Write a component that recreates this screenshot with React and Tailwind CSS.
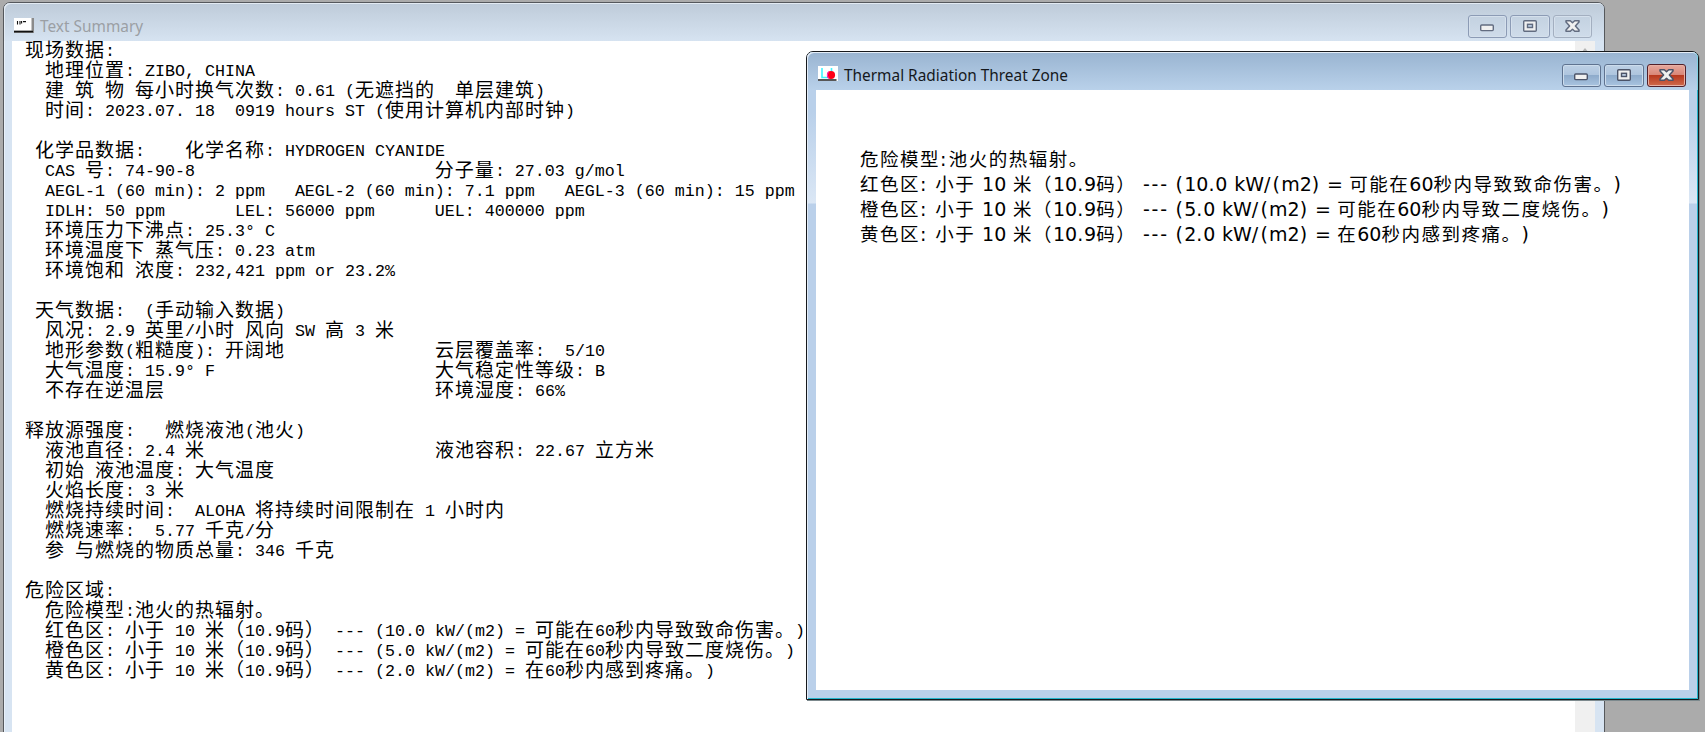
import clsx from 'clsx'

const SUMMARY = [
  '现场数据:',
  '  地理位置: ZIBO, CHINA',
  '  建 筑 物 每小时换气次数: 0.61 (无遮挡的  单层建筑)',
  '  时间: 2023.07. 18  0919 hours ST (使用计算机内部时钟)',
  '',
  ' 化学品数据:    化学名称: HYDROGEN CYANIDE',
  '  CAS 号: 74-90-8                        分子量: 27.03 g/mol',
  '  AEGL-1 (60 min): 2 ppm   AEGL-2 (60 min): 7.1 ppm   AEGL-3 (60 min): 15 ppm',
  '  IDLH: 50 ppm       LEL: 56000 ppm      UEL: 400000 ppm',
  '  环境压力下沸点: 25.3° C',
  '  环境温度下 蒸气压: 0.23 atm',
  '  环境饱和 浓度: 232,421 ppm or 23.2%',
  '',
  ' 天气数据:  (手动输入数据)',
  '  风况: 2.9 英里/小时 风向 SW 高 3 米',
  '  地形参数(粗糙度): 开阔地               云层覆盖率:  5/10',
  '  大气温度: 15.9° F                      大气稳定性等级: B',
  '  不存在逆温层                           环境湿度: 66%',
  '',
  '释放源强度:   燃烧液池(池火)',
  '  液池直径: 2.4 米                       液池容积: 22.67 立方米',
  '  初始 液池温度: 大气温度',
  '  火焰长度: 3 米',
  '  燃烧持续时间:  ALOHA 将持续时间限制在 1 小时内',
  '  燃烧速率:  5.77 千克/分',
  '  参 与燃烧的物质总量: 346 千克',
  '',
  '危险区域:',
  '  危险模型:池火的热辐射。',
  '  红色区: 小于 10 米（10.9码） --- (10.0 kW/(m2) = 可能在60秒内导致致命伤害。)',
  '  橙色区: 小于 10 米（10.9码） --- (5.0 kW/(m2) = 可能在60秒内导致二度烧伤。)',
  '  黄色区: 小于 10 米（10.9码） --- (2.0 kW/(m2) = 在60秒内感到疼痛。)',
]

const THREAT = [
  '危险模型:池火的热辐射。',
  '红色区: 小于 10 米（10.9码） --- (10.0 kW/(m2) = 可能在60秒内导致致命伤害。)',
  '橙色区: 小于 10 米（10.9码） --- (5.0 kW/(m2) = 可能在60秒内导致二度烧伤。)',
  '黄色区: 小于 10 米（10.9码） --- (2.0 kW/(m2) = 在60秒内感到疼痛。)',
]

const CJK = /([\u3000-\u9fff\uff00-\uffef]+)/

// Chinese runs take two columns per character, everything else one
function MonoLine({ text }) {
  return (
    <div className="flex h-5 items-center whitespace-pre leading-5">
      {text.split(CJK).filter(Boolean).map((run, i) => (
        <span
          key={i}
          className={clsx(
            CJK.test(run)
              ? "relative -top-[2px] font-['Noto_Sans_CJK_SC',sans-serif] text-[19px] tracking-[1px]"
              : "relative top-px font-['Liberation_Mono',monospace] text-[16.667px]"
          )}
        >
          {run}
        </span>
      ))}
    </div>
  )
}

const SPACING = {
  ':': 'tracking-[2.2px]',
  '-': 'tracking-[1.8px]',
  '(': 'tracking-[1.2px]',
  ')': 'tracking-[1.2px]',
  '/': 'tracking-[2.2px]',
  '.': 'tracking-[0.9px]',
  '=': '-tracking-[0.4px]',
  ' ': 'tracking-[0.65px]',
}

function SansLine({ text }) {
  return (
    <div className="flex h-[25px] items-center whitespace-pre leading-[25px]">
      {text.split(CJK).filter(Boolean).map((run, i) =>
        CJK.test(run) ? (
          <span key={i} className="relative -top-px font-['Noto_Sans_CJK_SC',sans-serif] text-[18.5px] tracking-[1.5px]">{run}</span>
        ) : (
          <span key={i} className="font-['DejaVu_Sans',sans-serif] text-[19px]">
            {run.split(/([:\-()/.= ])/).filter(Boolean).map((c, j) => (
              <span key={j} className={SPACING[c]}>{c}</span>
            ))}
          </span>
        )
      )}
    </div>
  )
}

function Glyph({ kind, active }) {
  const stroke = active ? '#4b5368' : '#626c80'
  if (kind === 'min') {
    return (
      <svg width="14" height="14" viewBox="0 0 14 14">
        <rect x="0.7" y="6" width="12.6" height="5.6" rx="1" fill="#f0f0f0" stroke={stroke} strokeWidth="1.4" />
      </svg>
    )
  }
  if (kind === 'max') {
    return (
      <svg width="14" height="12" viewBox="0 0 14 12">
        <rect x="0.7" y="0.7" width="12.6" height="10.6" rx="1" fill="#f0f0f0" stroke={stroke} strokeWidth="1.4" />
        <rect x="4.5" y="4.3" width="5" height="3.2" fill="#b9cbe0" stroke={stroke} strokeWidth="1.4" />
      </svg>
    )
  }
  return (
    <svg width="15" height="12" viewBox="0 0 15 12" className="relative -top-[0.5px]">
      <path
        d="M1 .8H5.3L7.5 2.8L9.7 .8H14V2L10.4 6L14 10V11.2H9.7L7.5 9.2L5.3 11.2H1V10L4.6 6L1 2Z"
        fill="#f0f0f0"
        stroke={stroke}
        strokeWidth="1.5"
        strokeLinejoin="round"
      />
    </svg>
  )
}

function Controls({ active }) {
  return (
    <div className="flex gap-[3px]">
      {['min', 'max', 'close'].map((kind) => (
        <button
          key={kind}
          className={clsx(
            'flex h-[22.5px] w-[39.5px] items-center justify-center rounded-[3px] border',
            !active && kind !== 'close' && 'border-[#8c9bb5] bg-linear-to-b from-[#c3d1e0] to-[#cfdcea] shadow-[inset_0_0_0_1px_#d5e0ec]',
            !active && kind === 'close' && 'border-[#a3afc0] bg-linear-to-b from-[#c3d1e0] to-[#cfdcea] shadow-[inset_0_0_0_1px_#d5e0ec]',
            active && kind !== 'close' && 'border-[#5f7390] bg-[linear-gradient(#bdd0e5_0%,#aec5de_47%,#8eabcb_50%,#a9c4e0_100%)] shadow-[inset_0_0_0_1px_#ccdcec]',
            active && kind === 'close' && 'border-[#52202a] bg-[linear-gradient(#e6a79d_0%,#d98778_47%,#b8391f_50%,#cf6a4c_100%)] shadow-[inset_0_0_0_1px_#e8b0a4]'
          )}
        >
          <Glyph kind={kind} active={active} />
        </button>
      ))}
    </div>
  )
}

function SummaryIcon() {
  return (
    <svg width="20" height="15" viewBox="0 0 20 15">
      <rect width="20" height="15" fill="#8b8b8b" />
      <rect width="17.5" height="12.6" fill="#fff" />
      <rect y="12.8" width="19" height="1.6" fill="#111" />
      <path d="M3.5 3V6.6M6 3V6.6M7.6 3V5.6M9 3.6H12" stroke="#111" strokeWidth="1.1" />
    </svg>
  )
}

function ThreatIcon() {
  return (
    <svg width="20" height="15" viewBox="0 0 20 15">
      <rect width="20" height="15" fill="#fff" />
      <path d="M4 2V11.5H10M13.5 2V6" stroke="#40f4ff" strokeWidth="1.6" fill="none" />
      <circle cx="13" cy="9" r="4.1" fill="#ff0018" />
      <path d="M10.5 12.5L9.3 9L10.5 5.5" stroke="#ff20d0" strokeWidth="1" fill="none" />
      <rect y="13.3" width="18.5" height="1.4" fill="#111" />
    </svg>
  )
}

function SummaryWindow() {
  return (
    <section className="absolute left-[3px] top-[2px] flex h-[760px] w-[1602px] flex-col rounded-t-[7px] border border-[#55585c] bg-[#d7e4f2] shadow-[inset_1px_1px_0_#e8f0f8]">
      <header className="flex h-[38px] shrink-0 items-start justify-between rounded-t-[6px] bg-linear-to-b from-[#becbd9] to-[#d6e3f1] pl-[10px] pr-[12px] shadow-[inset_1px_1px_0_#e3ebf3]">
        <div className="flex items-start pt-[10px]">
          <div className="pt-[5px]">
            <SummaryIcon />
          </div>
          <h1 className="ml-[6px] mt-[3px] font-['Noto_Sans',sans-serif] text-[15.4px] leading-[22px] text-[#9b9fa4]">Text Summary</h1>
        </div>
        <div className="pt-[12px]">
          <Controls />
        </div>
      </header>
      <div className="ml-2 mr-[9px] flex min-h-0 grow bg-white">
        <div className="grow pl-[13px] text-black">
          {SUMMARY.map((line, i) => (
            <MonoLine key={i} text={line} />
          ))}
        </div>
        <div className="flex w-5 justify-center bg-[#f0f0f0] pt-[7px]">
          <svg width="8" height="5" viewBox="0 0 8 5">
            <path d="M4 0L8 5H0Z" fill="#b5b5b5" />
          </svg>
        </div>
      </div>
    </section>
  )
}

function ThreatWindow() {
  return (
    <section className="absolute left-[806px] top-[51px] flex h-[649px] w-[893px] flex-col rounded-t-[7px] border border-[#16191d] bg-[linear-gradient(#b9d0ea_0px,#b9d0ea_60px,#dbe7f5_151px,#bad0ea_152px)] shadow-[inset_1px_1px_0_#e4edf7,inset_-1px_-1px_0_#23b5cc,1px_1px_0_#7d8a8e]">
      <header className="flex h-[38px] shrink-0 items-start justify-between rounded-t-[6px] bg-linear-to-b from-[#99b4d1] to-[#b9d1ea] pl-[11px] pr-[12px] shadow-[inset_1px_1px_0_#e4edf7,inset_-1px_0_0_#7fd3e4]">
        <div className="flex items-start pt-[10px]">
          <div className="pt-[4px]">
            <ThreatIcon />
          </div>
          <h2 className="ml-[6px] mt-[3px] font-['Noto_Sans',sans-serif] text-[15.4px] leading-[22px] text-[#15181c]">Thermal Radiation Threat Zone</h2>
        </div>
        <div className="pt-[12px]">
          <Controls active />
        </div>
      </header>
      <div className="mb-[9px] ml-[9px] mr-[9px] grow bg-white pl-[44px] pt-[57px] text-black">
        {THREAT.map((line, i) => (
          <SansLine key={i} text={line} />
        ))}
      </div>
    </section>
  )
}

export default function App() {
  return (
    <main className="relative h-[732px] w-[1705px] overflow-hidden bg-[#ababab]">
      <SummaryWindow />
      <ThreatWindow />
    </main>
  )
}
